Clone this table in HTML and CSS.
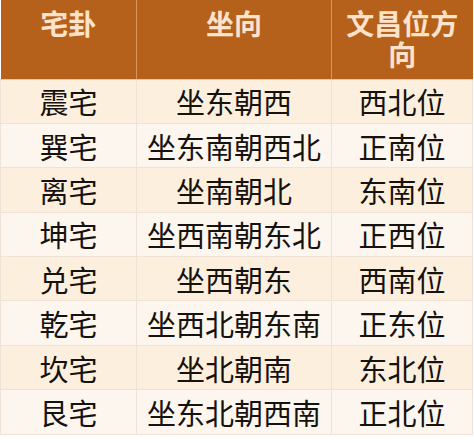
FILE: index.html
```html
<!DOCTYPE html>
<html lang="zh">
<head>
<meta charset="utf-8">
<link rel="stylesheet" href="styles.css">
</head>
<body>
<table class="grid">
  <colgroup>
    <col class="c1"><col class="c2"><col class="c3">
  </colgroup>
  <thead>
    <tr>
      <th>宅卦</th>
      <th>坐向</th>
      <th>文昌位方向</th>
    </tr>
  </thead>
  <tbody>
    <tr><td>震宅</td><td>坐东朝西</td><td>西北位</td></tr>
    <tr><td>巽宅</td><td>坐东南朝西北</td><td>正南位</td></tr>
    <tr><td>离宅</td><td>坐南朝北</td><td>东南位</td></tr>
    <tr><td>坤宅</td><td>坐西南朝东北</td><td>正西位</td></tr>
    <tr><td>兑宅</td><td>坐西朝东</td><td>西南位</td></tr>
    <tr><td>乾宅</td><td>坐西北朝东南</td><td>正东位</td></tr>
    <tr><td>坎宅</td><td>坐北朝南</td><td>东北位</td></tr>
    <tr><td>艮宅</td><td>坐东北朝西南</td><td>正北位</td></tr>
  </tbody>
</table>
</body>
</html>
```
FILE: styles.css
```css
html, body {
  margin: 0;
  padding: 0;
  background: #ffffff;
}
.grid {
  border-collapse: collapse;
  width: 472px;
  table-layout: fixed;
  font-family: "Noto Sans CJK SC", "Noto Sans", sans-serif;
  font-size: 29px;
}
.c1 { width: 136px; }
.c2 { width: 195px; }
.c3 { width: 141px; }
.grid th {
  background: #b5611b;
  color: #fde3cc;
  font-weight: bold;
  font-size: 28px;
  height: 79px;
  box-sizing: border-box;
  padding: 8px 14px 4px;
  line-height: 31px;
  vertical-align: top;
  border-right: 1px solid #d7985f;
  border-bottom: 1px solid #e9c8aa;
}
.grid th:last-child { border-right: none; }
.grid td {
  height: 44.4px;
  box-sizing: border-box;
  padding: 0;
  text-align: center;
  line-height: 32px;
  color: #151210;
  border: 1px solid #efe2d6;
}
.grid tbody tr:nth-child(odd) td { background: #fdefdd; }
.grid tbody tr:nth-child(even) td { background: #fdf6ee; }
```
